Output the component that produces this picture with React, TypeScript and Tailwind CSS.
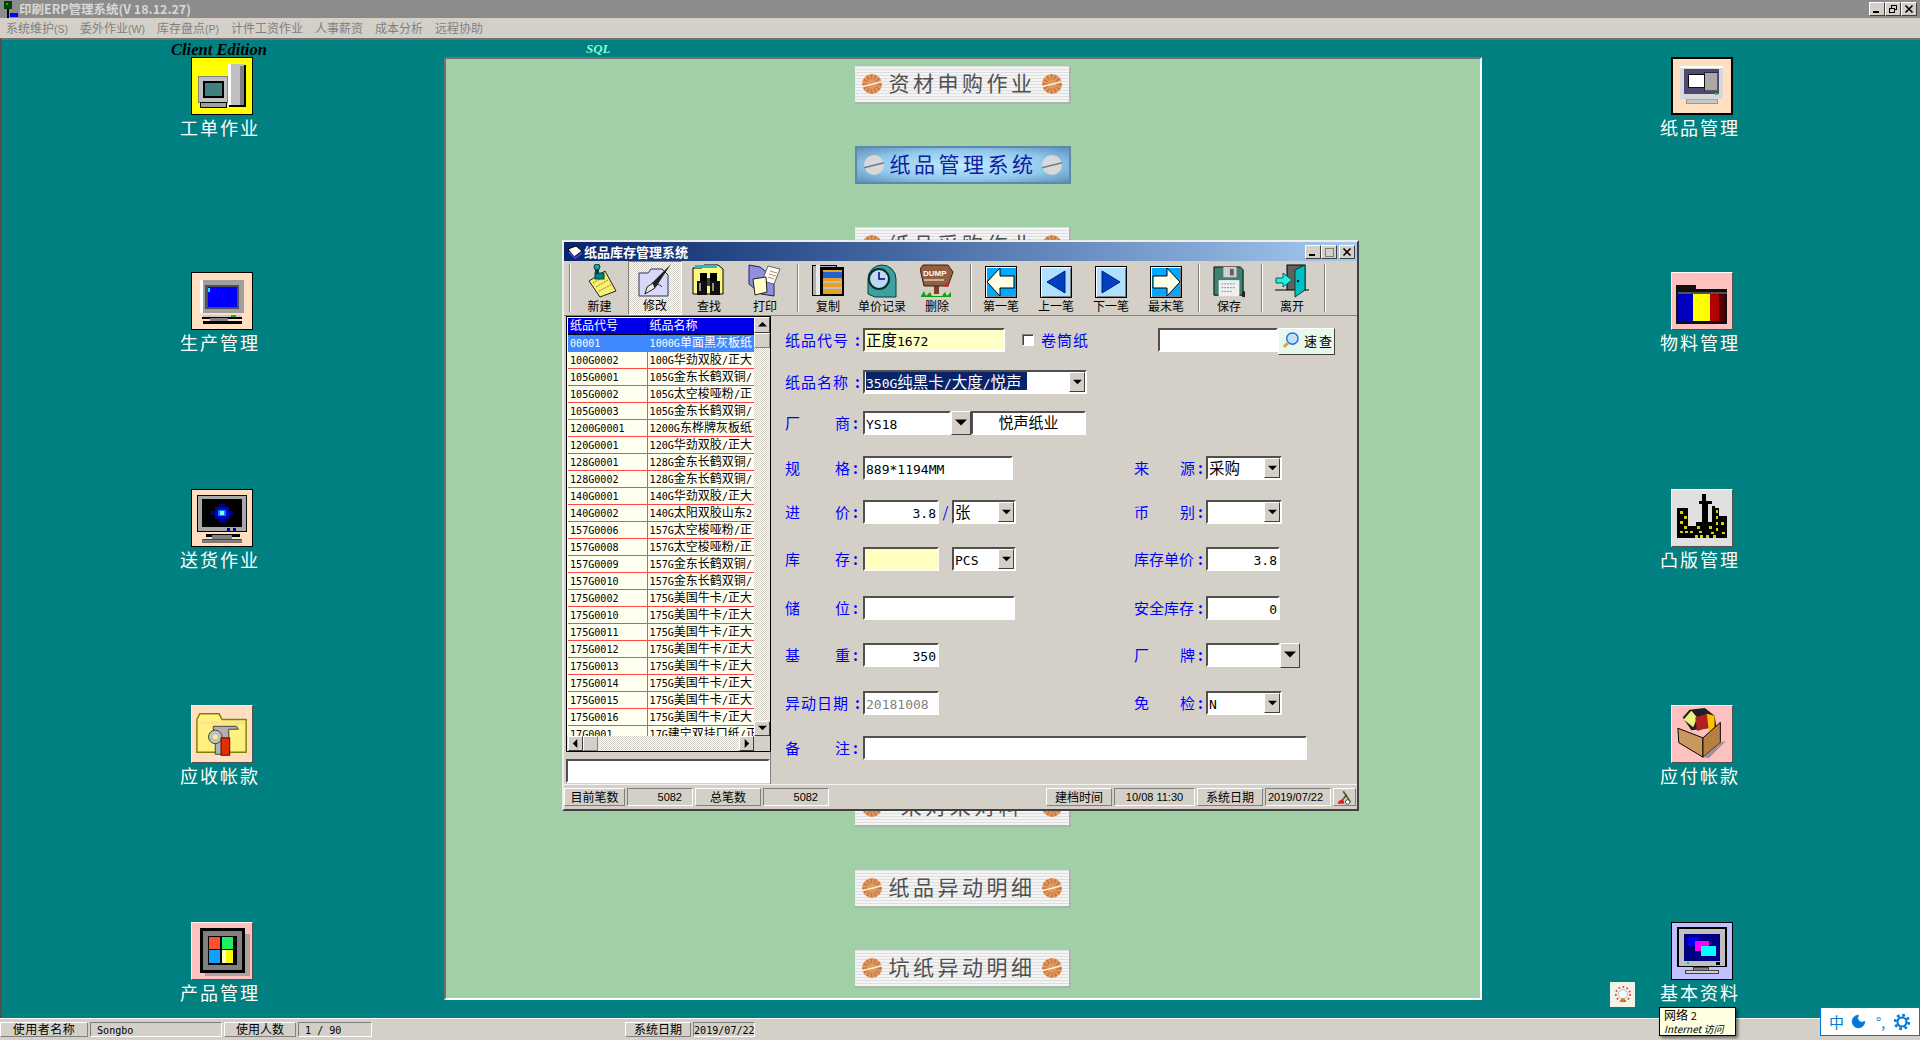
import { Moon } from 'lucide-react';
import type { ReactNode } from 'react';

const raised = 'border border-t-white border-l-white border-r-[#808080] border-b-[#808080]';
const sunken = 'border-2 border-t-[#505050] border-l-[#505050] border-r-white border-b-white';
const shallow = 'border border-t-[#808080] border-l-[#808080] border-r-white border-b-white';
const mono = "font-['DejaVu_Sans_Mono',monospace]";

// SimSun style text: latin runs are half the width of the CJK ones
function Txt({ children }: { children: string }) {
  return (
    <>
      {children.split(/([\x20-\x7e]+)/).map((part, i) =>
        i % 2 === 1 ? (
          <span key={i} className={`${mono} text-[0.84em]`}>{part}</span>
        ) : (
          <span key={i}>{part}</span>
        )
      )}
    </>
  );
}

/* ---------- desktop icons ---------- */

const IconWork = () => (
  <svg viewBox="0 0 62 58" className="w-full h-full" shapeRendering="crispEdges">
    <rect x="38" y="7" width="18" height="44" fill="#000" />
    <rect x="37" y="6" width="17" height="43" fill="#c0c0c0" />
    <rect x="37" y="6" width="3" height="43" fill="#fff" />
    <rect x="50" y="8" width="4" height="41" fill="#808080" />
    <rect x="7" y="19" width="30" height="27" fill="#c0c0c0" stroke="#808080" />
    <rect x="12" y="25" width="20" height="15" fill="#408080" stroke="#000" strokeWidth="2" />
    <rect x="9" y="46" width="27" height="5" fill="#a0a0a0" stroke="#000" />
  </svg>
);

const IconProd = () => (
  <svg viewBox="0 0 62 58" className="w-full h-full" shapeRendering="crispEdges">
    <rect x="8" y="7" width="46" height="34" fill="#a0a0a0" />
    <rect x="8" y="7" width="3" height="34" fill="#fff" />
    <rect x="13" y="12" width="36" height="25" fill="#505050" />
    <rect x="16" y="15" width="31" height="20" fill="#0000ff" />
    <rect x="17" y="16" width="2" height="4" fill="#00ffff" />
    <rect x="11" y="43" width="40" height="3" fill="#c8c8c8" />
    <rect x="40" y="43" width="5" height="3" fill="#00c000" />
    <rect x="10" y="46" width="42" height="2" fill="#000" />
    <rect x="19" y="47" width="18" height="4" fill="#808080" />
    <rect x="11" y="50" width="41" height="3" fill="#000" />
  </svg>
);

const IconDeliver = () => (
  <svg viewBox="0 0 62 58" className="w-full h-full" shapeRendering="crispEdges">
    <rect x="6" y="6" width="50" height="37" fill="#a8a8a8" stroke="#000" />
    <rect x="10" y="9" width="42" height="29" fill="#000" />
    <rect x="20" y="22" width="22" height="4" fill="#000080" />
    <rect x="28" y="14" width="6" height="20" fill="#000080" />
    <rect x="24" y="18" width="14" height="12" fill="#0000c0" />
    <rect x="27" y="21" width="8" height="6" fill="#0080ff" />
    <rect x="29" y="22" width="4" height="4" fill="#80ffff" />
    <rect x="36" y="39" width="3" height="3" fill="#0000a0" />
    <rect x="42" y="39" width="3" height="3" fill="#0000a0" />
    <rect x="14" y="46" width="36" height="3" fill="#000" />
    <rect x="21" y="47" width="20" height="4" fill="#808080" />
    <rect x="11" y="51" width="40" height="3" fill="#808080" stroke="#000" strokeWidth=".5" />
  </svg>
);

const IconReceive = () => (
  <svg viewBox="0 0 62 58" className="w-full h-full">
    <path d="M5 14 L8 8 H28 L31 14 H56 V48 H5 Z" fill="#fff080" stroke="#808000" strokeWidth="1.5" />
    <rect x="6" y="16" width="49" height="3" fill="#ffe090" />
    <path d="M22 21 H46 L48 24 H38 V50 H24 V27 H22 Z" fill="#b0b0b0" stroke="#404040" />
    <circle cx="24" cy="32" r="7" fill="#c0c0c0" stroke="#404040" />
    <circle cx="24" cy="32" r="2.5" fill="#fff080" />
    <rect x="30" y="33" width="9" height="18" fill="#e03000" stroke="#600000" />
  </svg>
);

const IconParts = () => (
  <svg viewBox="0 0 62 58" className="w-full h-full" shapeRendering="crispEdges">
    <rect x="13" y="11" width="47" height="44" fill="#b0a0a0" />
    <rect x="8" y="5" width="47" height="47" fill="#000" />
    <rect x="11" y="8" width="41" height="41" fill="#808080" />
    <rect x="16" y="13" width="31" height="31" fill="#000" />
    <rect x="18" y="14" width="11" height="13" fill="#ff5030" />
    <rect x="31" y="14" width="11" height="13" fill="#20f060" />
    <rect x="18" y="28" width="11" height="13" fill="#10a0ff" />
    <rect x="31" y="28" width="11" height="13" fill="#f8f800" />
    <rect x="31" y="28" width="4" height="13" fill="#ffffc0" />
  </svg>
);

const IconPaper = () => (
  <svg viewBox="0 0 62 58" className="w-full h-full" shapeRendering="crispEdges">
    <rect x="7" y="7" width="47" height="36" fill="#d8d8d8" />
    <rect x="7" y="7" width="47" height="3" fill="#fff" />
    <rect x="12" y="11" width="37" height="27" fill="#504870" />
    <rect x="34" y="15" width="14" height="19" fill="#a8a8a8" stroke="#000" strokeWidth=".5" />
    <rect x="17" y="17" width="17" height="14" fill="#fff" stroke="#000" />
    <rect x="45" y="37" width="3" height="2" fill="#00e000" />
    <rect x="14" y="44" width="34" height="4" fill="#c8c8c8" stroke="#606060" strokeWidth=".5" />
  </svg>
);

const IconMaterial = () => (
  <svg viewBox="0 0 62 58" className="w-full h-full" shapeRendering="crispEdges">
    <rect x="4" y="12" width="21" height="5" fill="#101010" />
    <rect x="4" y="17" width="53" height="36" fill="#101010" />
    <rect x="6" y="20" width="51" height="2" fill="#505050" />
    <rect x="6" y="22" width="16" height="28" fill="#0000c0" />
    <rect x="22" y="22" width="17" height="28" fill="#ffff00" />
    <rect x="39" y="22" width="10" height="28" fill="#b00000" />
    <rect x="49" y="22" width="6" height="28" fill="#500000" />
  </svg>
);

const IconPlate = () => (
  <svg viewBox="0 0 62 58" className="w-full h-full" shapeRendering="crispEdges">
    <path
      d="M5 50 V19 H17 V37 H25 V33 H31 V15 H28 V11 H31 V4 H35 V11 H41 V15 H37 V33 H41 V17 H44 V19 H49 V27 H57 V50 Z"
      fill="#000"
    />
    {[
      [8, 22], [12, 27], [8, 32], [12, 37], [8, 42], [13, 42], [19, 42], [26, 37], [28, 42], [38, 37], [35, 47],
      [45, 21], [45, 27], [45, 33], [51, 33], [45, 39], [52, 43], [40, 43], [24, 47], [29, 47], [42, 47],
    ].map(([x, y], i) => (
      <rect key={i} x={x} y={y} width="3" height="3" fill="#d8d000" />
    ))}
  </svg>
);

const IconPay = () => (
  <svg viewBox="0 0 62 58" className="w-full h-full">
    <path d="M11 12 L18 4 L34 2 L44 10 L46 22 L20 25 Z" fill="#202020" />
    <path d="M12 14 L20 5 L26 12 L22 22 Z" fill="#f0f080" />
    <path d="M24 12 L36 8 L39 22 L26 26 Z" fill="#b02020" />
    <path d="M36 8 L44 10 L44 24 L38 26 Z" fill="#ffc000" />
    <path d="M6 23 L32 33 L32 53 L7 38 Z" fill="#c89860" stroke="#000" />
    <path d="M32 33 L50 17 L50 38 L32 53 Z" fill="#b88040" stroke="#000" />
    <path d="M32 53 L50 38 L56 36 L38 54 Z" fill="#a09090" />
  </svg>
);

const IconBase = () => (
  <svg viewBox="0 0 62 58" className="w-full h-full" shapeRendering="crispEdges">
    <rect x="6" y="5" width="50" height="40" fill="#c0c0c0" stroke="#000" strokeWidth="1.5" />
    <rect x="12" y="11" width="38" height="28" fill="#000080" />
    <rect x="16" y="15" width="12" height="9" fill="#0000ff" />
    <rect x="24" y="19" width="14" height="10" fill="#ff00ff" />
    <rect x="30" y="24" width="15" height="10" fill="#00ffff" />
    <rect x="15" y="40" width="3" height="2" fill="#00e000" />
    <rect x="46" y="40" width="4" height="3" fill="#000" />
    <rect x="22" y="46" width="16" height="3" fill="#808080" stroke="#000" strokeWidth=".5" />
    <rect x="14" y="49" width="34" height="3" fill="#d0d0d0" stroke="#000" strokeWidth=".7" />
  </svg>
);

const black = 'border border-black';
const soft = 'border border-t-white border-l-white border-r-[#505050] border-b-[#505050]';

const leftModules = [
  { label: '工单作业', bg: 'bg-[#ffff00]', frame: black, icon: <IconWork />, gap: 'mt-0' },
  { label: '生产管理', bg: 'bg-[#ffdfc0]', frame: black, icon: <IconProd />, gap: 'mt-[135px]' },
  { label: '送货作业', bg: 'bg-[#ffdfc0]', frame: black, icon: <IconDeliver />, gap: 'mt-[137px]' },
  { label: '应收帐款', bg: 'bg-[#ffdfc0]', frame: soft, icon: <IconReceive />, gap: 'mt-[136px]' },
  { label: '产品管理', bg: 'bg-[#ffc0c0]', frame: soft, icon: <IconParts />, gap: 'mt-[137px]' },
];

const rightModules = [
  { label: '纸品管理', bg: 'bg-[#ffdfc0]', frame: 'border-2 border-black', icon: <IconPaper />, gap: 'mt-0' },
  { label: '物料管理', bg: 'bg-[#ffc0c0]', frame: soft, icon: <IconMaterial />, gap: 'mt-[135px]' },
  { label: '凸版管理', bg: 'bg-[#e0e0e0]', frame: soft, icon: <IconPlate />, gap: 'mt-[137px]' },
  { label: '应付帐款', bg: 'bg-[#ffc0c0]', frame: soft, icon: <IconPay />, gap: 'mt-[136px]' },
  { label: '基本资料', bg: 'bg-[#c0c0ff]', frame: black, icon: <IconBase />, gap: 'mt-[137px]' },
];

function Module({ label, bg, frame, icon, gap }: { label: string; bg: string; frame: string; icon: ReactNode; gap: string }) {
  return (
    <div className={`${gap} w-[80px]`}>
      <div className={`w-[62px] h-[58px] ml-[11px] ${bg} ${frame}`}>{icon}</div>
      <div className="mt-[3px] mb-[1px] h-[18px] text-[18px] leading-[18px] tracking-[2px] text-white whitespace-nowrap">{label}</div>
    </div>
  );
}

/* ---------- green panel banners ---------- */

const banners = ['资材申购作业', '纸品管理系统', '纸品采购作业', '纸品入库作业', '纸品领用作业', '纸品退料作业', '纸品盘点作业', '纸品调拨作业', '来料检验作业', '来对来对料', '纸品异动明细', '坑纸异动明细'];

function Ball({ active }: { active: boolean }) {
  return (
    <svg viewBox="0 0 20 20" className="w-[20px] h-[20px] shrink-0">
      <circle cx="10" cy="10" r="10" fill={active ? '#d8d8d8' : '#e09a60'} />
      {!active && <circle cx="10" cy="10" r="7" fill="none" stroke="#c87840" strokeWidth="5" strokeDasharray="1.5 2" />}
      <path d="M0 12 L20 7 L20 8.5 L0 13.5 Z" fill={active ? '#607890' : '#fff0e0'} />
    </svg>
  );
}

function Banner({ label, active }: { label: string; active: boolean }) {
  return (
    <div
      className={`w-[216px] h-[38px] flex items-center justify-between px-[7px] ${
        active
          ? 'bg-[radial-gradient(ellipse_at_center,#c0ecff_0%,#90c8ec_60%,#6090b8_100%)] border-2 border-[#5f88aa]'
          : 'bg-[repeating-linear-gradient(0deg,#f4f4f4_0px,#f4f4f4_2px,#dedede_2px,#dedede_3px)] border-b-2 border-r-2 border-b-[#a8b8a8] border-r-[#a8b8a8]'
      }`}
    >
      <Ball active={active} />
      <span className={`pb-[4px] text-[21px] leading-[24px] tracking-[3.5px] whitespace-nowrap ${active ? 'text-[#1020a0]' : 'text-[#505050]'}`}>{label}</span>
      <Ball active={active} />
    </div>
  );
}

/* ---------- toolbar icons ---------- */

const IcoNew = () => (
  <svg viewBox="0 0 34 34" className="w-[34px] h-[34px]">
    <path d="M6 17 L22 7 L33 27 L17 33 Z" fill="#f8f070" stroke="#202020" />
    <path d="M10 19 L22 12 M13 23 L25 16 M16 27 L28 21" stroke="#908020" strokeDasharray="2 1" />
    <rect x="12" y="9" width="9" height="6" fill="#008080" stroke="#004040" />
    <circle cx="14" cy="3" r="3" fill="#20a0a0" stroke="#004040" />
    <rect x="12" y="5" width="4" height="5" fill="#004040" />
  </svg>
);

const IcoEdit = () => (
  <svg viewBox="0 0 34 34" className="w-[34px] h-[34px]">
    <path d="M1 10 H10 L13 6 H24 L30 12 V33 H1 Z" fill="#d8d8f8" stroke="#303060" />
    <path d="M14 26 Q19 18 24 24" stroke="#303060" fill="none" />
    <path d="M33 1 L14 20 L6 31 L18 24 Z" fill="#202020" />
    <path d="M9 24 L15 20 L17 25 L7 31 Z" fill="#e8e8e8" stroke="#202020" />
  </svg>
);

const IcoFind = () => (
  <svg viewBox="0 0 34 34" className="w-[34px] h-[34px]">
    <path d="M1 4 H10 L12 1 H26 L31 5 V30 H1 Z" fill="#fff880" stroke="#000" />
    <rect x="3" y="1" width="22" height="3" fill="#20c0c0" />
    <rect x="8" y="9" width="7" height="8" fill="#000" />
    <rect x="18" y="9" width="7" height="8" fill="#000" />
    <path d="M5 17 H15 V31 H5 Z M18 17 H28 V31 H18 Z" fill="#101010" />
    <rect x="15" y="14" width="3" height="8" fill="#404040" />
    <rect x="7" y="19" width="2" height="8" fill="#909090" />
    <rect x="20" y="19" width="2" height="8" fill="#909090" />
  </svg>
);

const IcoPrint = () => (
  <svg viewBox="0 0 34 34" className="w-[34px] h-[34px]">
    <path d="M1 1 L12 3 L26 14 V32 L13 30 L1 20 Z" fill="#9090e0" stroke="#202060" />
    <path d="M20 2 L32 5 L26 20 L14 17 Z" fill="#fff" stroke="#606060" />
    <path d="M22 7 L29 9 M21 10 L28 12 M20 13 L26 15" stroke="#b09060" />
    <path d="M5 15 L18 13 L19 28 L7 31 Z" fill="#ffffc8" stroke="#202020" />
  </svg>
);

const IcoCopy = () => (
  <svg viewBox="0 0 34 34" className="w-[34px] h-[34px]" shapeRendering="crispEdges">
    <rect x="1" y="1" width="24" height="30" fill="#b0b0b0" stroke="#000" />
    <rect x="5" y="1" width="4" height="30" fill="#e8e8e8" />
    <rect x="9" y="3" width="24" height="29" fill="#000" />
    <rect x="12" y="6" width="19" height="24" fill="#e8a020" />
    <rect x="12" y="8" width="19" height="6" fill="#2060d0" />
    <rect x="12" y="17" width="19" height="2" fill="#c0c0c0" />
    <rect x="12" y="23" width="19" height="2" fill="#c0c0c0" />
  </svg>
);

const IcoClock = () => (
  <svg viewBox="0 0 34 34" className="w-[34px] h-[34px]">
    <path d="M3 30 V15 A14 14 0 0 1 31 15 V33 H10 Z" fill="#40a0a0" stroke="#004040" />
    <circle cx="14" cy="15" r="10" fill="#c0d8f0" stroke="#003030" strokeWidth="2" />
    <path d="M14 8 V15 H20" stroke="#000080" strokeWidth="1.5" fill="none" />
  </svg>
);

const IcoDump = () => (
  <svg viewBox="0 0 34 34" className="w-[34px] h-[34px]">
    <rect x="14" y="18" width="5" height="12" fill="#804020" />
    <path d="M0 5 L3 1 H28 L33 8 L28 22 H4 Z" fill="#906040" stroke="#402010" />
    <text x="3" y="12" fontSize="8" fontWeight="700" fill="#fff" fontFamily="Liberation Sans">DUMP</text>
    <path d="M4 16 H24" stroke="#fff" />
    <path d="M1 32 L4 27 L6 32 L10 28 L12 32 H22 L25 28 L27 32 L31 28 V33 H1 Z" fill="#10a010" />
    <circle cx="27" cy="21" r="2" fill="#e02020" />
  </svg>
);

function Nav({ bg, children }: { bg: string; children: ReactNode }) {
  return (
    <div className={`w-[32px] h-[32px] border border-black ${bg} shadow-[inset_1px_1px_0_#fff,inset_-1px_-1px_0_#808080]`}>
      <svg viewBox="0 0 30 30" className="w-full h-full">{children}</svg>
    </div>
  );
}

const IcoFirst = () => (
  <Nav bg="bg-[#00a8ff]"><path d="M1 15 L14 1 V9 H28 V21 H14 V29 Z" fill="#ffffe8" stroke="#000" /></Nav>
);
const IcoPrev = () => (
  <Nav bg="bg-[#b0e0ff]"><path d="M6 15 L24 4 V26 Z" fill="#0040c0" stroke="#002080" /></Nav>
);
const IcoNext = () => (
  <Nav bg="bg-[#b0e0ff]"><path d="M24 15 L6 4 V26 Z" fill="#0040c0" stroke="#002080" /></Nav>
);
const IcoLast = () => (
  <Nav bg="bg-[#00a8ff]"><path d="M29 15 L16 1 V9 H2 V21 H16 V29 Z" fill="#ffffe8" stroke="#000" /></Nav>
);

const IcoSave = () => (
  <svg viewBox="0 0 34 34" className="w-[32px] h-[32px]">
    <path d="M1 1 H29 L32 4 V31 H1 Z" fill="#408070" stroke="#000" />
    <rect x="11" y="1" width="14" height="11" fill="#d0d0d0" />
    <rect x="18" y="3" width="4" height="7" fill="#606060" />
    <rect x="6" y="15" width="22" height="17" fill="#f0f0f0" />
    <path d="M9 19 H24 M9 23 H24 M9 27 H20" stroke="#7090a0" strokeDasharray="2 1" />
    <rect x="31" y="27" width="3" height="6" fill="#202020" />
  </svg>
);

const IcoExit = () => (
  <svg viewBox="0 0 34 34" className="w-[34px] h-[34px]">
    <rect x="12" y="1" width="18" height="25" fill="#606060" stroke="#000" />
    <path d="M20 6 L30 1 V26 L20 33 Z" fill="#00c0c0" stroke="#004040" />
    <circle cx="23" cy="17" r="1.2" fill="#000" />
    <path d="M1 14 H8 V9 L17 16 L8 23 V19 H1 Z" fill="#20f0e0" stroke="#006060" />
    <path d="M0 26 H12 M30 26 H34" stroke="#000" />
  </svg>
);

const Sep = ({ ml }: { ml: string }) => <div className={`${ml} w-[2px] h-[48px] self-center border-l border-l-[#808080] border-r border-r-white shrink-0`} />;

function Tool({ w, label, icon, pressed }: { w: string; label: string; icon: ReactNode; pressed?: boolean }) {
  return (
    <div
      className={`${w} shrink-0 h-full flex flex-col items-center justify-end pb-[2px] ${
        pressed
          ? 'bg-[repeating-conic-gradient(#d4d0c8_0_25%,#ffffff_0_50%)] bg-[length:2px_2px] border border-t-[#808080] border-l-[#808080] border-r-white border-b-white'
          : ''
      }`}
    >
      <div className="h-[34px] flex items-end justify-center">{icon}</div>
      <div className="h-[15px] text-[12px] leading-[15px] text-black whitespace-nowrap">{label}</div>
    </div>
  );
}

/* ---------- list data ---------- */

const rows = [
  ['00001', '1000G单面黑灰板纸'],
  ['100G0002', '100G华劲双胶/正大'],
  ['105G0001', '105G金东长鹤双铜/'],
  ['105G0002', '105G太空梭哑粉/正'],
  ['105G0003', '105G金东长鹤双铜/'],
  ['1200G0001', '1200G东桦牌灰板纸'],
  ['120G0001', '120G华劲双胶/正大'],
  ['128G0001', '128G金东长鹤双铜/'],
  ['128G0002', '128G金东长鹤双铜/'],
  ['140G0001', '140G华劲双胶/正大'],
  ['140G0002', '140G太阳双胶山东2'],
  ['157G0006', '157G太空梭哑粉/正'],
  ['157G0008', '157G太空梭哑粉/正'],
  ['157G0009', '157G金东长鹤双铜/'],
  ['157G0010', '157G金东长鹤双铜/'],
  ['175G0002', '175G美国牛卡/正大'],
  ['175G0010', '175G美国牛卡/正大'],
  ['175G0011', '175G美国牛卡/正大'],
  ['175G0012', '175G美国牛卡/正大'],
  ['175G0013', '175G美国牛卡/正大'],
  ['175G0014', '175G美国牛卡/正大'],
  ['175G0015', '175G美国牛卡/正大'],
  ['175G0016', '175G美国牛卡/正大'],
  ['17G0001', '17G建宁双挂口纸/正'],
];

const Arrow = ({ dir, size = 'small' }: { dir: 'up' | 'down' | 'left' | 'right'; size?: 'small' | 'big' }) => {
  const d = { up: 'M0 6 L5 1 L10 6 Z', down: 'M0 2 H10 L5 7 Z', left: 'M7 0 V10 L2 5 Z', right: 'M3 0 V10 L8 5 Z' }[dir];
  return (
    <svg viewBox="0 0 10 10" className={size === 'big' ? 'w-[12px] h-[12px]' : 'w-[9px] h-[9px]'}>
      <path d={d} fill="#000" />
    </svg>
  );
};

const ScrollBtn = ({ dir, cls }: { dir: 'up' | 'down' | 'left' | 'right'; cls: string }) => (
  <div className={`${cls} shrink-0 bg-[#d4d0c8] border border-t-white border-l-white border-r-[#404040] border-b-[#404040] flex items-center justify-center`}>
    <Arrow dir={dir} />
  </div>
);

const checker = 'bg-[repeating-conic-gradient(#d4d0c8_0_25%,#ffffff_0_50%)] bg-[length:2px_2px]';

/* ---------- form parts ---------- */

function Label({ text, w, tight }: { text: string; w: string; tight?: boolean }) {
  const two = text.length === 2;
  return (
    <div className="flex items-center text-[15px] leading-[20px] text-[#0000ff] shrink-0 whitespace-nowrap">
      <div className={`${w} flex ${two ? 'justify-between' : tight ? '' : 'tracking-[1px]'}`}>
        {two ? text.split('').map((c) => <span key={c}>{c}</span>) : text}
      </div>
      <span className="w-[11px] text-center font-bold">:</span>
    </div>
  );
}

function Field({ w, value = '', right, bg = 'bg-white', color = 'text-black' }: { w: string; value?: string; right?: boolean; bg?: string; color?: string }) {
  return (
    <div className={`${w} h-[24px] shrink-0 ${sunken} ${bg} ${color} px-[1px] text-[15.5px] leading-[19px] whitespace-nowrap overflow-hidden ${right ? 'text-right' : ''}`}>
      <Txt>{value}</Txt>
    </div>
  );
}

function Combo({ w, value = '' }: { w: string; value?: string }) {
  return (
    <div className={`${w} h-[24px] shrink-0 ${sunken} bg-white flex justify-between text-[15.5px] leading-[19px] text-black pl-[1px]`}>
      <span><Txt>{value}</Txt></span>
      <div className="w-[16px] h-[20px] bg-[#d4d0c8] border border-t-white border-l-white border-r-[#404040] border-b-[#404040] flex items-center justify-center">
        <Arrow dir="down" />
      </div>
    </div>
  );
}

const Row = ({ gap, children }: { gap: string; children: ReactNode }) => <div className={`${gap} h-[24px] flex items-center`}>{children}</div>;

// left half of a form row runs up to the second label column
const LeftCell = ({ children }: { children: ReactNode }) => <div className="w-[349px] shrink-0 flex items-center">{children}</div>;

function StatusLabel({ w, text }: { w: string; text: string }) {
  return <div className={`${w} shrink-0 h-full ${raised} text-[12px] leading-[16px] text-center whitespace-nowrap`}>{text}</div>;
}

function StatusValue({ w, text, right, cls = '' }: { w: string; text?: string; right?: boolean; cls?: string }) {
  return (
    <div className={`${w} shrink-0 h-full ${shallow} text-[11px] leading-[16px] px-[2px] whitespace-nowrap font-['Liberation_Sans',sans-serif] ${right ? 'text-right pr-[10px]' : ''} ${cls}`}>
      {text}
    </div>
  );
}

/* ---------- dialog ---------- */

function StockDialog() {
  return (
    <div className="absolute left-[562px] top-[240px] w-[797px] h-[571px] bg-[#d4d0c8] border-2 border-t-[#f0eee8] border-l-[#f0eee8] border-r-[#404040] border-b-[#404040] flex flex-col">
      {/* title */}
      <div className="h-[19px] shrink-0 bg-gradient-to-r from-[#0a246a] to-[#a6caf0] flex items-center pl-[3px] pr-[2px]">
        <svg viewBox="0 0 16 14" className="w-[16px] h-[14px] mr-[1px]">
          <path d="M1 4 L9 1 L15 6 L7 12 Z" fill="#fff" stroke="#000" />
          <path d="M2 7 L8 13 L15 8" stroke="#4040c0" strokeWidth="2" fill="none" />
        </svg>
        <span className="text-[13px] leading-[19px] font-bold text-white">纸品库存管理系统</span>
        <div className="ml-auto flex">
          <WinBtn kind="min" />
          <WinBtn kind="max" />
          <div className="w-[2px]" />
          <WinBtn kind="close" />
        </div>
      </div>

      {/* toolbar */}
      <div className="h-[55px] shrink-0 flex pl-[5px] border-b border-b-[#808080]">
        <Sep ml="ml-0" />
        <Tool w="w-[57px]" label="新建" icon={<IcoNew />} />
        <Tool w="w-[54px]" label="修改" icon={<IcoEdit />} pressed />
        <Tool w="w-[54px]" label="查找" icon={<IcoFind />} />
        <Tool w="w-[58px]" label="打印" icon={<IcoPrint />} />
        <Sep ml="ml-[3px]" />
        <Tool w="w-[58px]" label="复制" icon={<IcoCopy />} />
        <Tool w="w-[50px]" label="单价记录" icon={<IcoClock />} />
        <Tool w="w-[60px]" label="删除" icon={<IcoDump />} />
        <Sep ml="ml-[3px]" />
        <Tool w="w-[58px]" label="第一笔" icon={<IcoFirst />} />
        <Tool w="w-[52px]" label="上一笔" icon={<IcoPrev />} />
        <Tool w="w-[58px]" label="下一笔" icon={<IcoNext />} />
        <Tool w="w-[52px]" label="最末笔" icon={<IcoLast />} />
        <Sep ml="ml-[6px]" />
        <Tool w="w-[58px]" label="保存" icon={<IcoSave />} />
        <Sep ml="ml-[3px]" />
        <Tool w="w-[58px]" label="离开" icon={<IcoExit />} />
        <Sep ml="ml-[3px]" />
      </div>

      {/* body */}
      <div className="flex-1 flex min-h-0">
        {/* list side */}
        <div className="w-[207px] shrink-0 pl-[2px] pr-[1px] flex flex-col border-r border-r-[#808080]">
          <div className="w-[205px] h-[436px] border border-black flex flex-col bg-white">
            <div className="flex-1 flex min-h-0">
              <div className="w-[187px] pl-[1px] overflow-hidden">
                <div className="flex h-[18px] bg-[#0000e8] text-white text-[12px] leading-[13px] border-t border-t-white border-b border-b-black">
                  <div className="w-[80px] pl-[2px] border-r border-r-black">纸品代号</div>
                  <div className="w-[107px] pl-[2px]">纸品名称</div>
                </div>
                {rows.map(([code, name], i) => (
                  <div key={code} className={`flex h-[17px] text-[12px] leading-[13px] border-b border-b-[#ff4848] ${i === 0 ? 'bg-[#4088ff] text-white' : 'bg-[#fffff0] text-black'}`}>
                    <div className="w-[80px] pl-[2px] border-r border-r-[#ff4848] whitespace-nowrap overflow-hidden"><Txt>{code}</Txt></div>
                    <div className="w-[107px] pl-[2px] whitespace-nowrap overflow-hidden"><Txt>{name}</Txt></div>
                  </div>
                ))}
              </div>
              <div className={`w-[16px] flex flex-col ${checker}`}>
                <ScrollBtn dir="up" cls="h-[16px] w-[16px]" />
                <div className="h-[15px] w-[16px] bg-[#d4d0c8] border border-t-white border-l-white border-r-[#808080] border-b-[#808080]" />
                <div className="flex-1" />
                <ScrollBtn dir="down" cls="h-[15px] w-[16px]" />
              </div>
            </div>
            <div className="h-[15px] shrink-0 flex bg-[#d4d0c8]">
              <div className={`w-[187px] flex pl-[1px] ${checker}`}>
                <ScrollBtn dir="left" cls="w-[15px] h-[15px]" />
                <div className="w-[15px] h-[15px] bg-[#d4d0c8] border border-t-white border-l-white border-r-[#808080] border-b-[#808080]" />
                <div className="flex-1" />
                <ScrollBtn dir="right" cls="w-[15px] h-[15px]" />
              </div>
            </div>
          </div>
          <div className={`mt-[7px] w-[204px] h-[24px] ${sunken} bg-white`} />
        </div>

        {/* form side */}
        <div className="flex-1 pl-[14px] pt-[12px] flex flex-col text-black">
          <Row gap="mt-0">
            <Label text="纸品代号" w="w-[67px]" />
            <Field w="w-[142px]" value="正度1672" bg="bg-[#ffffc8]" />
            <div className="w-[12px] h-[12px] ml-[17px] bg-white border border-t-[#808080] border-l-[#808080] border-r-white border-b-white shadow-[inset_1px_1px_0_#404040]" />
            <span className="ml-[7px] text-[15px] leading-[20px] text-[#0000ff] tracking-[1px]">卷筒纸</span>
            <div className={`ml-[69px] w-[120px] h-[24px] ${sunken} bg-white`} />
            <div className="w-[57px] h-[27px] self-start bg-[#e8f8ec] border border-t-white border-l-white border-r-[#404040] border-b-[#404040] flex items-center pl-[3px] pb-[2px]">
              <svg viewBox="0 0 18 18" className="w-[17px] h-[17px]">
                <circle cx="11" cy="7" r="6" fill="#c0e0ff" stroke="#2070d0" strokeWidth="1.5" />
                <path d="M6 12 L2 16" stroke="#e0a030" strokeWidth="3" />
              </svg>
              <span className="ml-[5px] text-[13px] leading-[16px] tracking-[2px]">速查</span>
            </div>
          </Row>

          <Row gap="mt-[18px]">
            <Label text="纸品名称" w="w-[67px]" />
            <div className={`w-[224px] h-[24px] ${sunken} bg-white flex justify-between pl-[1px]`}>
              <span className="h-[18px] w-[161px] bg-[#0a246a] text-white text-[15.5px] leading-[18px] whitespace-nowrap overflow-hidden"><Txt>350G纯黑卡/大度/悦声</Txt></span>
              <div className="w-[16px] h-[20px] bg-[#d4d0c8] border border-t-white border-l-white border-r-[#404040] border-b-[#404040] flex items-center justify-center">
                <Arrow dir="down" />
              </div>
            </div>
          </Row>

          <Row gap="mt-[17px]">
            <Label text="厂商" w="w-[65px]" />
            <div className="w-[2px]" />
            <Field w="w-[88px]" value="YS18" />
            <div className="w-[20px] h-[24px] bg-[#d4d0c8] border border-t-white border-l-white border-r-[#404040] border-b-[#404040] flex items-center justify-center">
              <Arrow dir="down" size="big" />
            </div>
            <div className={`w-[115px] h-[24px] ${sunken} bg-white text-center text-[15px] leading-[18px]`}>悦声纸业</div>
          </Row>

          <Row gap="mt-[21px]">
            <LeftCell>
              <Label text="规格" w="w-[65px]" />
              <div className="w-[2px]" />
              <Field w="w-[150px]" value="889*1194MM" />
            </LeftCell>
            <Label text="来源" w="w-[61px]" tight />
            <Combo w="w-[76px]" value="采购" />
          </Row>

          <Row gap="mt-[20px]">
            <LeftCell>
              <Label text="进价" w="w-[65px]" />
              <div className="w-[2px]" />
              <Field w="w-[76px]" value="3.8" right />
              <span className="w-[13px] text-center text-[15px] text-[#0000ff] leading-[20px]">/</span>
              <Combo w="w-[64px]" value="张" />
            </LeftCell>
            <Label text="币别" w="w-[61px]" tight />
            <Combo w="w-[76px]" />
          </Row>

          <Row gap="mt-[23px]">
            <LeftCell>
              <Label text="库存" w="w-[65px]" />
              <div className="w-[2px]" />
              <Field w="w-[76px]" bg="bg-[#ffffc0]" />
              <div className="w-[13px]" />
              <Combo w="w-[64px]" value="PCS" />
            </LeftCell>
            <Label text="库存单价" w="w-[61px]" tight />
            <Field w="w-[74px]" value="3.8" right />
          </Row>

          <Row gap="mt-[25px]">
            <LeftCell>
              <Label text="储位" w="w-[65px]" />
              <div className="w-[2px]" />
              <Field w="w-[152px]" />
            </LeftCell>
            <Label text="安全库存" w="w-[61px]" tight />
            <Field w="w-[74px]" value="0" right />
          </Row>

          <Row gap="mt-[23px]">
            <LeftCell>
              <Label text="基重" w="w-[65px]" />
              <div className="w-[2px]" />
              <Field w="w-[76px]" value="350" right />
            </LeftCell>
            <Label text="厂牌" w="w-[61px]" tight />
            <Field w="w-[74px]" />
            <div className="w-[20px] h-[25px] bg-[#d4d0c8] border border-t-white border-l-white border-r-[#404040] border-b-[#404040] flex items-center justify-center">
              <Arrow dir="down" size="big" />
            </div>
          </Row>

          <Row gap="mt-[24px]">
            <LeftCell>
              <Label text="异动日期" w="w-[67px]" />
              <Field w="w-[76px]" value="20181008" color="text-[#808080]" />
            </LeftCell>
            <Label text="免检" w="w-[61px]" tight />
            <Combo w="w-[76px]" value="N" />
          </Row>

          <Row gap="mt-[21px]">
            <Label text="备注" w="w-[65px]" />
            <div className="w-[2px]" />
            <Field w="w-[444px]" />
          </Row>
        </div>
      </div>

      {/* status */}
      <div className="h-[25px] shrink-0 border-t border-t-[#f4f2ec] flex items-center pt-[3px] pb-[3px] pl-0 gap-[2px]">
        <StatusLabel w="w-[61px]" text="目前笔数" />
        <StatusValue w="w-[66px]" text="5082" right />
        <StatusLabel w="w-[66px]" text="总笔数" />
        <StatusValue w="w-[66px]" text="5082" right />
        <div className="w-[213px] shrink-0" />
        <StatusLabel w="w-[66px]" text="建档时间" />
        <StatusValue w="w-[81px]" text="10/08  11:30" cls="text-center" />
        <StatusLabel w="w-[66px]" text="系统日期" />
        <StatusValue w="w-[66px]" text="2019/07/22" />
        <div className={`w-[23px] h-full ${raised} flex items-center justify-center`}>
          <svg viewBox="0 0 20 16" className="w-[18px] h-[15px]">
            <path d="M8 1 L16 13" stroke="#606020" strokeWidth="2" />
            <path d="M12 5 L6 12" stroke="#404040" strokeWidth="1.5" />
            <path d="M2 15 A4 4 0 0 1 9 12 V15 Z" fill="#e02020" />
            <circle cx="13" cy="13" r="2.5" fill="#fff" stroke="#404040" />
          </svg>
        </div>
      </div>
    </div>
  );
}

function WinBtn({ kind }: { kind: 'min' | 'max' | 'restore' | 'close' }) {
  return (
    <div className="w-[16px] h-[14px] bg-[#d4d0c8] border border-t-white border-l-white border-r-[#404040] border-b-[#404040] flex items-center justify-center">
      <svg viewBox="0 0 10 10" className="w-[10px] h-[10px]" shapeRendering="crispEdges">
        {kind === 'min' && <rect x="1" y="7" width="6" height="2" fill="#000" />}
        {kind === 'max' && <rect x="1" y="1" width="8" height="8" fill="none" stroke={'#808080'} strokeWidth="1" />}
        {kind === 'restore' && (
          <>
            <rect x="3.5" y="1.5" width="5" height="4" fill="none" stroke="#000" />
            <rect x="1.5" y="4.5" width="5" height="4" fill="#d4d0c8" stroke="#000" />
          </>
        )}
        {kind === 'close' && <path d="M1.5 1.5 L8.5 8.5 M8.5 1.5 L1.5 8.5" stroke="#000" strokeWidth="1.6" shapeRendering="auto" />}
      </svg>
    </div>
  );
}

const menus = [
  ['系统维护', '(S)'],
  ['委外作业', '(W)'],
  ['库存盘点', '(P)'],
  ['计件工资作业', ''],
  ['人事薪资', ''],
  ['成本分析', ''],
  ['远程协助', ''],
];

export default function App() {
  return (
    <div className="relative w-[1920px] h-[1040px] overflow-hidden flex flex-col bg-[#d4d0c8] font-['Noto_Sans_CJK_SC','Liberation_Sans',sans-serif]">
      {/* app title */}
      <div className="h-[18px] shrink-0 bg-[#8c8c8c] flex items-center pl-[2px] pr-[3px]">
        <svg viewBox="0 0 16 18" className="w-[16px] h-[18px]" shapeRendering="crispEdges">
          <rect x="2" y="1" width="8" height="8" fill="#004000" />
          <rect x="4" y="3" width="2" height="2" fill="#00c000" />
          <rect x="5" y="9" width="2" height="9" fill="#000" />
          <rect x="8" y="13" width="8" height="4" fill="#0000ff" />
        </svg>
        <span className="ml-[1px] text-[12.5px] leading-[18px] font-bold text-[#d8d8d8]">印刷ERP管理系统(V 18.12.27)</span>
        <div className="ml-auto flex">
          <WinBtn kind="min" />
          <WinBtn kind="restore" />
          <WinBtn kind="close" />
        </div>
      </div>

      {/* menu */}
      <div className="h-[20px] shrink-0 flex items-center gap-[12px] pl-[6px] text-[12px] leading-[20px] text-[#808080]">
        {menus.map(([name, key]) => (
          <span key={name}>
            {name}
            {key && <span className="font-['Liberation_Sans',sans-serif] text-[10.5px]">{key}</span>}
          </span>
        ))}
      </div>

      {/* desktop */}
      <div className="h-[980px] shrink-0 bg-[#008080] border-t-2 border-t-[#707070] border-l-2 border-l-[#505050] flex">
        <div className="w-[442px] shrink-0 pt-[17px] pl-[178px] flex flex-col">
          {leftModules.map((m) => <Module key={m.label} {...m} />)}
        </div>

        <div className="w-[1038px] h-[943px] mt-[17px] shrink-0 bg-[#a0cfa8] border-t-2 border-l-2 border-t-[#707070] border-l-[#707070] border-r-2 border-b-2 border-r-white border-b-white pt-[7px] pb-[10px] flex flex-col items-center justify-between">
          {banners.map((b, i) => <Banner key={i} label={b} active={i === 1} />)}
        </div>

        <div className="flex-1 pt-[17px] pl-[178px] flex flex-col">
          {rightModules.map((m) => <Module key={m.label} {...m} />)}
        </div>
      </div>

      {/* bottom status */}
      <div className="flex-1 border-t border-t-white pt-[3px] flex flex-col">
        <div className="h-[15px] flex text-[12px] leading-[11px] text-black gap-[2px]">
          <div className={`w-[88px] ${raised} text-center tracking-[.5px]`}>使用者名称</div>
          <div className={`w-[132px] ${shallow} px-[6px]`}><Txt>Songbo</Txt></div>
          <div className={`w-[72px] ${raised} text-center`}>使用人数</div>
          <div className={`w-[74px] ${shallow} px-[6px]`}><Txt>1 / 90</Txt></div>
          <div className="w-[249px]" />
          <div className={`w-[66px] ${raised} text-center`}>系统日期</div>
          <div className={`w-[62px] ${shallow} whitespace-nowrap`}><Txt>2019/07/22</Txt></div>
        </div>
      </div>

      {/* floating labels */}
      <span className="absolute left-[171px] top-[41px] font-['Liberation_Serif',serif] italic font-bold text-[16.5px] leading-[17px] text-black whitespace-nowrap">Client Edition</span>
      <span className="absolute left-[586px] top-[40px] font-['Liberation_Serif',serif] italic font-bold text-[13px] leading-[17px] text-[#7fffd4]">SQL</span>

      <StockDialog />

      {/* tray bulb */}
      <div className="absolute left-[1610px] top-[982px] w-[25px] h-[25px] bg-[#eef4e8] flex items-center justify-center">
        <svg viewBox="0 0 20 20" className="w-[18px] h-[18px]">
          <circle cx="10" cy="9" r="5" fill="#fff" stroke="#a0b0d0" />
          <rect x="8" y="14" width="4" height="4" fill="#c09000" />
          <circle cx="10" cy="9" r="8" fill="none" stroke="#f04040" strokeWidth="2" strokeDasharray="2 2.6" />
        </svg>
      </div>

      {/* tooltip */}
      <div className="absolute left-[1659px] top-[1007px] w-[77px] h-[29px] bg-[#ffffe1] border border-black shadow-[2px_2px_3px_rgba(0,0,0,.5)] pl-[4px] text-black">
        <div className="text-[12px] leading-[14px]">网络 <span className="text-[11px]">2</span></div>
        <div className="text-[10px] leading-[13px] italic whitespace-nowrap">Internet 访问</div>
      </div>

      {/* ime bar */}
      <div className="absolute left-[1820px] top-[1007px] w-[100px] h-[29px] bg-white border border-[#0078d7] flex items-center pl-[8px] text-[#0078d7]">
        <span className="text-[15px] leading-[20px]">中</span>
        <Moon className="ml-[6px] w-[17px] h-[17px]" fill="#0078d7" strokeWidth={1} />
        <span className="ml-[9px] w-[12px] text-[14px] leading-[16px]">°,</span>
        <svg viewBox="0 0 20 20" className="ml-[5px] w-[18px] h-[18px]">
          <circle cx="10" cy="10" r="5" fill="none" stroke="#0078d7" strokeWidth="2.4" />
          <circle cx="10" cy="10" r="7.6" fill="none" stroke="#0078d7" strokeWidth="3" strokeDasharray="3 2.97" />
        </svg>
      </div>
    </div>
  );
}
